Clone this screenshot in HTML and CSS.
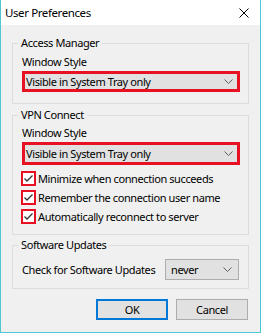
FILE: index.html
```html
<!DOCTYPE html>
<html lang="en">
<head>
  <meta charset="UTF-8" />
  <title>User Preferences</title>
  <link rel="stylesheet" href="styles.css">
</head>
<body>

  <div class="window">
    <div class="titlebar">
      <span class="title">User Preferences</span>
      <svg class="close" width="10" height="10" viewBox="0 0 10 10">
        <path d="M0.5 0.5 L9.5 9.5 M9.5 0.5 L0.5 9.5" stroke="#000" stroke-width="1" fill="none" />
      </svg>
    </div>

    <div class="content">
      <fieldset class="group group-access">
        <legend>Access Manager</legend>
        <div class="group-body">
          <div class="label">Window Style</div>
          <div class="combo marked">
            <span>Visible in System Tray only</span>
            <svg class="chevron" width="9" height="5" viewBox="0 0 9 5"><polyline points="0.5,0.5 4.5,4.5 8.5,0.5" /></svg>
          </div>
        </div>
      </fieldset>

      <fieldset class="group group-vpn">
        <legend>VPN Connect</legend>
        <div class="group-body">
          <div class="label">Window Style</div>
          <div class="combo marked tall">
            <span>Visible in System Tray only</span>
            <svg class="chevron" width="9" height="5" viewBox="0 0 9 5"><polyline points="0.5,0.5 4.5,4.5 8.5,0.5" /></svg>
          </div>
          <div class="checks">
            <label class="check">
              <span class="box"><svg width="9" height="7" viewBox="0 0 9 7"><polyline points="0.5,3.5 3,6 8.5,0.5" /></svg></span>
              <span>Minimize when connection succeeds</span>
            </label>
            <label class="check">
              <span class="box"><svg width="9" height="7" viewBox="0 0 9 7"><polyline points="0.5,3.5 3,6 8.5,0.5" /></svg></span>
              <span>Remember the connection user name</span>
            </label>
            <label class="check">
              <span class="box"><svg width="9" height="7" viewBox="0 0 9 7"><polyline points="0.5,3.5 3,6 8.5,0.5" /></svg></span>
              <span>Automatically reconnect to server</span>
            </label>
          </div>
        </div>
      </fieldset>

      <fieldset class="group group-updates">
        <legend>Software Updates</legend>
        <div class="group-body update-row">
          <span>Check for Software Updates</span>
          <div class="combo small">
            <span>never</span>
            <svg class="chevron" width="9" height="5" viewBox="0 0 9 5"><polyline points="0.5,0.5 4.5,4.5 8.5,0.5" /></svg>
          </div>
        </div>
      </fieldset>

      <div class="buttons">
        <button class="btn btn-default">OK</button>
        <button class="btn">Cancel</button>
      </div>
    </div>
  </div>

</body>
</html>
```

FILE: styles.css
```css
* {
  margin: 0;
  padding: 0;
  box-sizing: border-box;
}

body {
  background: #f0f0f0;
  font-family: 'Noto Sans', sans-serif;
  font-size: 11px;
  letter-spacing: -0.4px;
  color: #000;
  white-space: nowrap;
}

.window {
  width: 261px;
  height: 333px;
  background: #f0f0f0;
  border: 1px solid #4fc6d0;
  border-top: none;
}

.titlebar {
  height: 25px;
  background: #fff;
  display: flex;
  align-items: center;
  justify-content: space-between;
  padding: 0 11px 0 4px;
}

.title {
  line-height: 16px;
  font-size: 11.5px;
}

.content {
  padding: 10px 11px 0;
}

.group {
  border: 1px solid #dcdcdc;
  padding: 0 0 0 5px;
  min-width: 0;
}

.group legend {
  padding: 0 3px;
  line-height: 16px;
}

.group-body {
  padding: 0 8px 0 4px;
}

.group-access {
  padding-bottom: 11px;
}

.group-vpn {
  margin-top: 3px;
  padding-bottom: 8px;
}

.group-updates {
  margin-top: 2px;
  padding-bottom: 8px;
}

.label {
  line-height: 16px;
  margin-top: 3px;
}

.group-vpn .label {
  margin-top: 2px;
}

.combo {
  display: flex;
  align-items: center;
  justify-content: space-between;
  background: #e1e1e1;
  border: 1px solid #adadad;
  height: 21px;
  line-height: 15px;
}

.combo.marked {
  border: 3px solid #e81123;
  margin-top: 1px;
  padding: 0 4px 0 1px;
}

.combo.tall {
  height: 23px;
}

.chevron {
  fill: none;
  stroke: #606060;
  stroke-width: 1;
}

.checks {
  margin-top: 4px;
}

.check {
  display: flex;
  align-items: center;
  height: 19px;
  margin-left: -1px;
}

.box {
  width: 15px;
  height: 15px;
  border: 2px solid #e81123;
  background: #fff;
  display: flex;
  align-items: center;
  justify-content: center;
  margin-right: 2px;
}

.box svg {
  fill: none;
  stroke: #333;
  stroke-width: 1.3;
}

.update-row {
  display: flex;
  align-items: center;
  justify-content: space-between;
  padding-right: 9px;
  margin-top: 6px;
}

.combo.small {
  width: 74px;
  padding: 0 6px 0 5px;
}

.buttons {
  display: flex;
  justify-content: flex-end;
  gap: 8px;
  margin-top: 10px;
  padding-right: 1px;
}

.btn {
  width: 72px;
  height: 21px;
  background: #e1e1e1;
  border: 1px solid #adadad;
  font-family: inherit;
  font-size: 11px;
  letter-spacing: -0.4px;
  color: #000;
}

.btn-default {
  border: 2px solid #0078d7;
}
```
